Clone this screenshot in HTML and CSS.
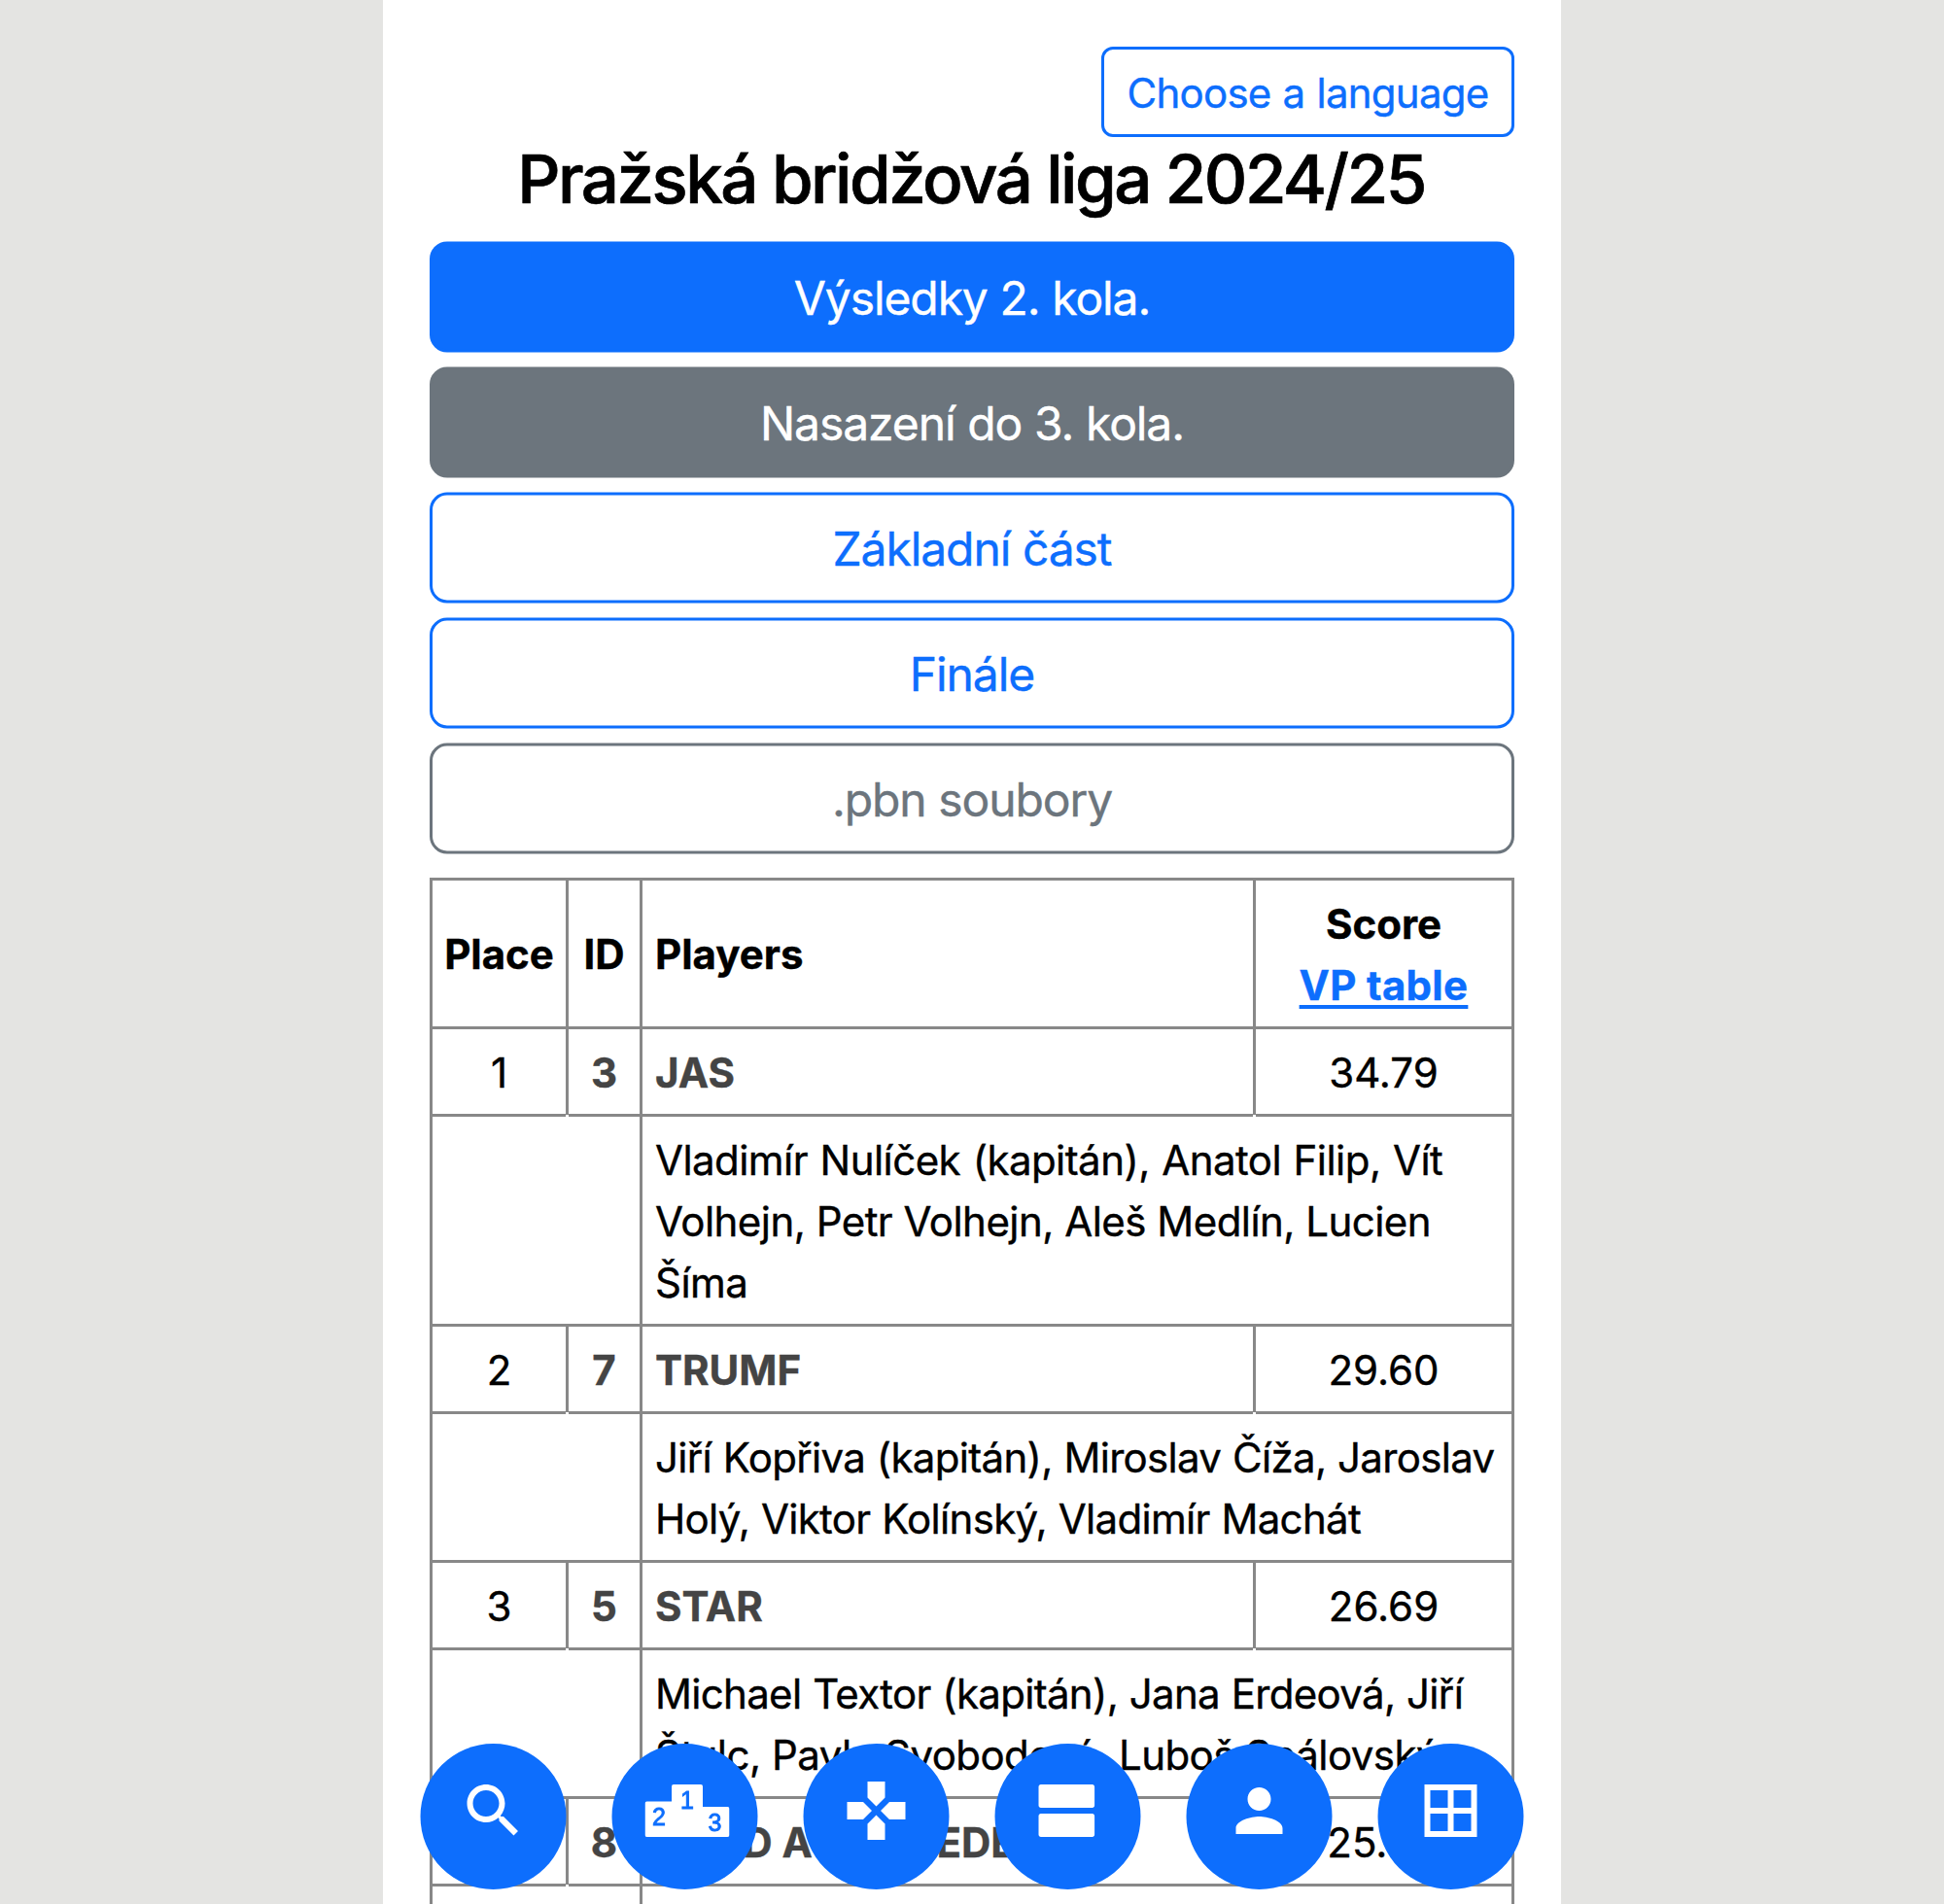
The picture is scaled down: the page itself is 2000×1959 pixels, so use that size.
FILE: index.html
```html
<!DOCTYPE html>
<html lang="cs">
<head>
<meta charset="utf-8">
<title>Pražská bridžová liga 2024/25</title>
<link rel="stylesheet" href="styles.css">
</head>
<body>
<main class="page">
  <div class="toolbar"><a class="btn btn-sm btn-outline-primary">Choose a language</a></div>
  <h1 class="title">Pražská bridžová liga 2024/25</h1>
  <nav class="links">
    <a class="btn btn-primary">Výsledky 2. kola.</a>
    <a class="btn btn-secondary">Nasazení do 3. kola.</a>
    <a class="btn btn-outline-primary">Základní část</a>
    <a class="btn btn-outline-primary">Finále</a>
    <a class="btn btn-outline-secondary">.pbn soubory</a>
  </nav>
  <table class="results">
    <colgroup><col class="col-place"><col class="col-id"><col class="col-players"><col class="col-score"></colgroup>
    <thead>
      <tr><th>Place</th><th>ID</th><th class="left">Players</th><th class="score">Score<br><a class="vp">VP table</a></th></tr>
    </thead>
    <tbody>
      <tr class="team"><td>1</td><td class="name">3</td><td class="name left">JAS</td><td>34.79</td></tr>
      <tr><td colspan="2"></td><td colspan="2" class="left roster roster-loose"><span class="airy">Vladimír Nulíček (kapitán), Anatol Filip, Vít</span><br>Volhejn, Petr Volhejn, Aleš Medlín, Lucien<br>Šíma</td></tr>
      <tr class="team"><td>2</td><td class="name">7</td><td class="name left">TRUMF</td><td>29.60</td></tr>
      <tr><td colspan="2"></td><td colspan="2" class="left roster">Jiří Kopřiva (kapitán), Miroslav Číža, Jaroslav<br>Holý, Viktor Kolínský, Vladimír Machát</td></tr>
      <tr class="team"><td>3</td><td class="name">5</td><td class="name left">STAR</td><td>26.69</td></tr>
      <tr><td colspan="2"></td><td colspan="2" class="left roster">Michael Textor (kapitán), Jana Erdeová, Jiří<br><span class="roster-loose">Štulc, Pavla Svobodová, Luboš Spálovský</span></td></tr>
      <tr class="team"><td>4</td><td class="name">8</td><td class="name left">HRAD A NEDVEDE</td><td>25.44</td></tr>
      <tr><td colspan="2"></td><td colspan="2" class="left">&nbsp;</td></tr>
    </tbody>
  </table>
</main>
<nav class="dock">
  <a class="dock-item"><svg class="icon" viewBox="0 0 24 24"><path d="M15.5 14h-.79l-.28-.27C15.41 12.59 16 11.11 16 9.500 16 5.910 13.090 3 9.500 3S3 5.910 3 9.500 5.910 16 9.500 16c1.610 0 3.090-.59 4.230-1.570l.27.28v.79l5 4.990L20.490 19l-4.990-5zm-6 0C7.010 14 5 11.990 5 9.500S7.010 5 9.500 5 14 7.010 14 9.500 11.990 14 9.500 14z"/></svg></a>
  <a class="dock-item"><svg class="icon podium" viewBox="0 0 87 72"><path d="M2 26.500H27.500V11a2 2 0 0 1 2-2H57.500a2 2 0 0 1 2 2V32H85a2 2 0 0 1 2 2V61a2 2 0 0 1-2 2H2a2 2 0 0 1-2-2V28.500a2 2 0 0 1 2-2z"/><g class="digits"><text x="43.500" y="33.500">1</text><text x="14.500" y="51">2</text><text x="72" y="57">3</text></g></svg></a>
  <a class="dock-item"><svg class="icon" viewBox="0 0 24 24"><path d="M15 7.500V2H9v5.500l3 3 3-3zM7.500 9H2v6h5.500l3-3-3-3zM9 16.500V22h6v-5.500l-3-3-3 3zM16.500 9l-3 3 3 3H22V9h-5.500z"/></svg></a>
  <a class="dock-item"><svg class="icon" viewBox="0 0 24 24"><path d="M20.400 13H2.800c-.45 0-.8.35-.8.8v6.400c0 .45.35.8.8.8h17.600c.45 0 .8-.35.8-.8v-6.400c0-.45-.35-.8-.8-.8zm0-10H2.800c-.45 0-.8.35-.8.8v6.400c0 .45.35.8.8.8h17.600c.45 0 .8-.35.8-.8V3.800c0-.45-.35-.8-.8-.8z"/></svg></a>
  <a class="dock-item"><svg class="icon" viewBox="0 0 24 24"><path d="M12 12c2.210 0 4-1.790 4-4s-1.790-4-4-4-4 1.790-4 4 1.790 4 4 4zm0 2c-2.670 0-8 1.340-8 4v2h16v-2c0-2.660-5.330-4-8-4z"/></svg></a>
  <a class="dock-item"><svg class="icon" viewBox="0 0 24 24"><path d="M3 3v18h18V3H3zm8 16H5v-6h6v6zm0-8H5V5h6v6zm8 8h-6v-6h6v6zm0-8h-6V5h6v6z"/></svg></a>
</nav>
</body>
</html>
```
FILE: styles.css
```css
* { box-sizing: border-box; }
html { height: 100%; overflow: hidden; }
body {
  margin: 0;
  height: 100%;
  overflow: hidden;
  background: #e4e4e2;
  color: #000;
  font: 400 42px/63px Inter, "Liberation Sans", sans-serif;
  -webkit-text-stroke: 0.4px currentColor;
}
.page {
  width: 1212px;
  height: 1959px;
  margin: 0 auto;
  padding: 48px 48px 0;
  overflow: hidden;
  background: #fff;
}
.toolbar { display: flex; justify-content: flex-end; }
.btn {
  display: block;
  border: 3px solid;
  border-radius: 18px;
  padding: 19px 18px 17px;
  font-size: 48px;
  line-height: 72px;
  letter-spacing: -1.1px;
  word-spacing: 0.4px;
  text-align: center;
  white-space: nowrap;
}
.btn-sm {
  width: 425px;
  padding: 13px 0 11px;
  border-radius: 12px;
  font-size: 42px;
  line-height: 63px;
  letter-spacing: -0.75px;
  word-spacing: 1px;
}
.btn-primary { background: #0d6efd; border-color: #0d6efd; color: #fff; }
.btn-secondary { background: #6c757d; border-color: #6c757d; color: #fff; }
.btn-outline-primary { border-color: #0d6efd; color: #0d6efd; }
.btn-outline-secondary { border-color: #6c757d; color: #6c757d; }
.title {
  margin: 0 0 16px;
  height: 91px;
  font-size: 69px;
  line-height: 87px;
  font-weight: 500;
  letter-spacing: -2.5px;
  text-indent: -2px;
  text-align: center;
  white-space: nowrap;
  -webkit-text-stroke-width: 0.7px;
}
.links {
  display: flex;
  flex-direction: column;
  gap: 15px;
  transform: translateY(0.5px);
}
.results {
  width: 1116px;
  margin-top: 25px;
  border-collapse: collapse;
  table-layout: fixed;
  white-space: nowrap;
}
.col-place { width: 140px; }
.col-id { width: 76px; }
.col-players { width: 631px; }
.col-score { width: 266px; }
.results th, .results td {
  border: 3px solid #888;
  padding: 13px 0 11px;
  text-align: center;
  vertical-align: middle;
}
.results th { font-weight: 700; padding: 12px 0; }
.results .score { padding: 13px 0 11px; }
.results .left { text-align: left; padding-left: 13px; }
.results .name { font-weight: 700; color: #444; }
.roster { letter-spacing: -0.68px; word-spacing: 0.6px; }
.roster-loose { letter-spacing: -0.55px; word-spacing: 0.2px; }
.airy { word-spacing: 1.3px; }
.vp {
  color: #0d6efd;
  letter-spacing: 0.3px;
  text-decoration: underline;
  text-decoration-thickness: 4px;
  text-underline-offset: 5px;
}
.team td { position: relative; }
.team td:first-child::after, .team td:nth-child(3)::after {
  content: "";
  position: absolute;
  right: -3px;
  bottom: -3px;
  width: 3px;
  height: 2px;
  background: #fff;
}
.dock {
  position: fixed;
  left: 0;
  right: 1px;
  bottom: 15px;
  display: flex;
  justify-content: center;
  gap: 47px;
  transform: translateX(0.5px);
}
.dock-item {
  display: flex;
  justify-content: center;
  width: 150px;
  height: 150px;
  padding-top: 33px;
  border-radius: 50%;
  background: #0d6efd;
}
.icon { width: 72px; height: 72px; fill: #fff; }
.podium { width: 87px; margin-left: 4px; }
.digits {
  fill: #0d6efd;
  stroke: #0d6efd;
  stroke-width: 0.9px;
  font: 400 25px "Liberation Sans", sans-serif;
  text-anchor: middle;
}
```
